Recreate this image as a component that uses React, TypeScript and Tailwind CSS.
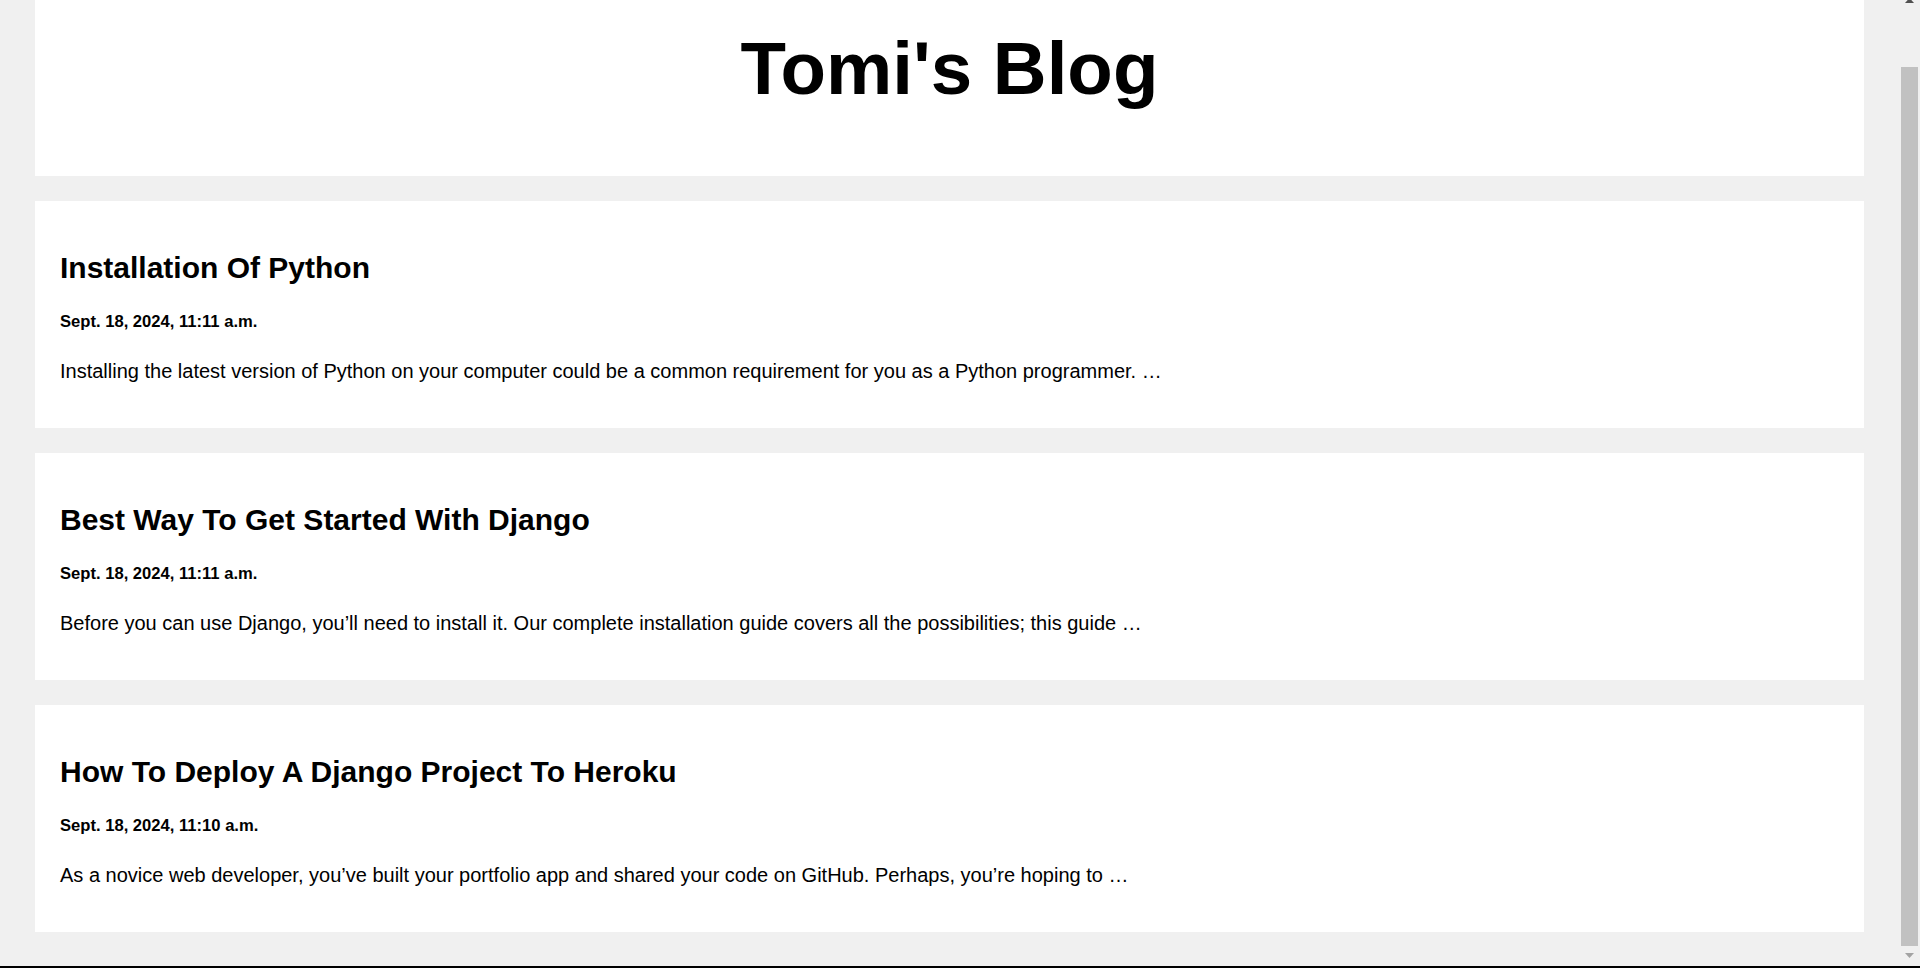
const posts = [
  {
    title: 'Installation Of Python',
    date: 'Sept. 18, 2024, 11:11 a.m.',
    excerpt:
      'Installing the latest version of Python on your computer could be a common requirement for you as a Python programmer. …',
  },
  {
    title: 'Best Way To Get Started With Django',
    date: 'Sept. 18, 2024, 11:11 a.m.',
    excerpt:
      'Before you can use Django, you’ll need to install it. Our complete installation guide covers all the possibilities; this guide …',
  },
  {
    title: 'How To Deploy A Django Project To Heroku',
    date: 'Sept. 18, 2024, 11:10 a.m.',
    excerpt:
      'As a novice web developer, you’ve built your portfolio app and shared your code on GitHub. Perhaps, you’re hoping to …',
  },
]

function PostCard({ title, date, excerpt }: { title: string; date: string; excerpt: string }) {
  return (
    <article className="h-[227px] bg-white px-[25px] pt-[52px]">
      <h2 className="text-[30px] font-bold leading-[30px] text-black">{title}</h2>
      <p className="mt-[31px] text-[16.6px] font-bold leading-[16px] text-black">{date}</p>
      <p className="mt-[31px] text-[20px] leading-[20px] text-black">{excerpt}</p>
    </article>
  )
}

// Fake classic scrollbar, page is scrolled to the bottom
function Scrollbar() {
  return (
    <div className="flex w-[21px] flex-col items-center">
      <svg width="9" height="4" viewBox="0 0 9 4" className="shrink-0">
        <polygon points="4.5,-2 9,3 0,3" fill="#505050" />
      </svg>
      <div className="mt-[63px] h-[879px] w-[17px] bg-[#c1c1c1]" />
      <svg width="9" height="5" viewBox="0 0 9 5" className="mt-[7px] shrink-0">
        <polygon points="0,0 9,0 4.5,5" fill="#a3a3a3" />
      </svg>
    </div>
  )
}

export default function App() {
  return (
    <div className="flex h-[968px] w-full flex-col overflow-hidden bg-[#f0f0f0] font-['Liberation_Sans',Arial,sans-serif]">
      <div className="flex flex-1">
        <main className="flex w-[1829px] flex-col gap-[25px] ml-[35px] mr-[35px]">
          <header className="h-[176px] bg-white pt-[31px]">
            <h1 className="text-center text-[74.5px] font-bold leading-[75px] text-black">Tomi's Blog</h1>
          </header>
          {posts.map((post) => (
            <PostCard key={post.title} {...post} />
          ))}
        </main>
        <Scrollbar />
      </div>
      <div className="h-[2px] bg-black" />
    </div>
  )
}
